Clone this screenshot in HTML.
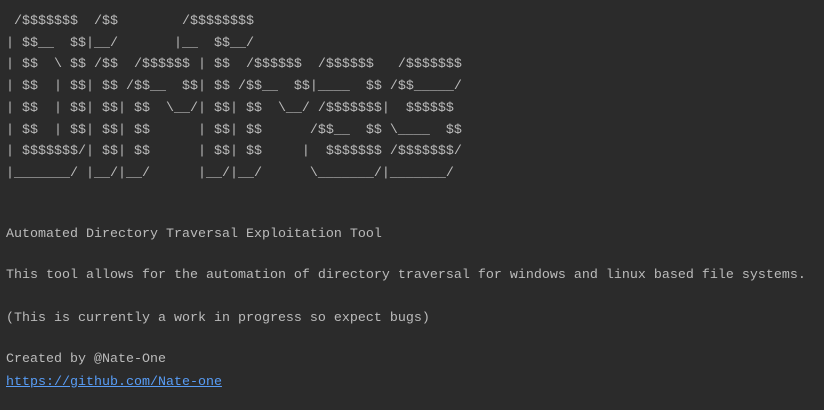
<!DOCTYPE html>
<html><head><meta charset="utf-8"><style>
html,body{margin:0;padding:0;width:824px;height:410px;background:#2b2b2b;overflow:hidden}
pre{position:absolute;left:6px;margin:0;font-family:"Liberation Mono",monospace;font-size:13.33px;line-height:20px;color:#bbbbbb;white-space:pre}
a{color:#589df6;text-decoration:underline}
</style></head><body>
<pre style="top:12px"> /$$$$$$$  /$$        /$$$$$$$$</pre>
<pre style="top:33.7px">| $$__  $$|__/       |__  $$__/</pre>
<pre style="top:55.4px">| $$  \ $$ /$$  /$$$$$$ | $$  /$$$$$$  /$$$$$$   /$$$$$$$</pre>
<pre style="top:77.1px">| $$  | $$| $$ /$$__  $$| $$ /$$__  $$|____  $$ /$$_____/</pre>
<pre style="top:98.8px">| $$  | $$| $$| $$  \__/| $$| $$  \__/ /$$$$$$$|  $$$$$$</pre>
<pre style="top:120.5px">| $$  | $$| $$| $$      | $$| $$      /$$__  $$ \____  $$</pre>
<pre style="top:142.2px">| $$$$$$$/| $$| $$      | $$| $$     |  $$$$$$$ /$$$$$$$/</pre>
<pre style="top:163.9px">|_______/ |__/|__/      |__/|__/      \_______/|_______/</pre>
<pre style="top:225px">Automated Directory Traversal Exploitation Tool</pre>
<pre style="top:266px">This tool allows for the automation of directory traversal for windows and linux based file systems.</pre>
<pre style="top:309px">(This is currently a work in progress so expect bugs)</pre>
<pre style="top:350px">Created by @Nate-One</pre>
<pre style="top:373px"><a>https://github.com/Nate-one</a></pre>
</body></html>
